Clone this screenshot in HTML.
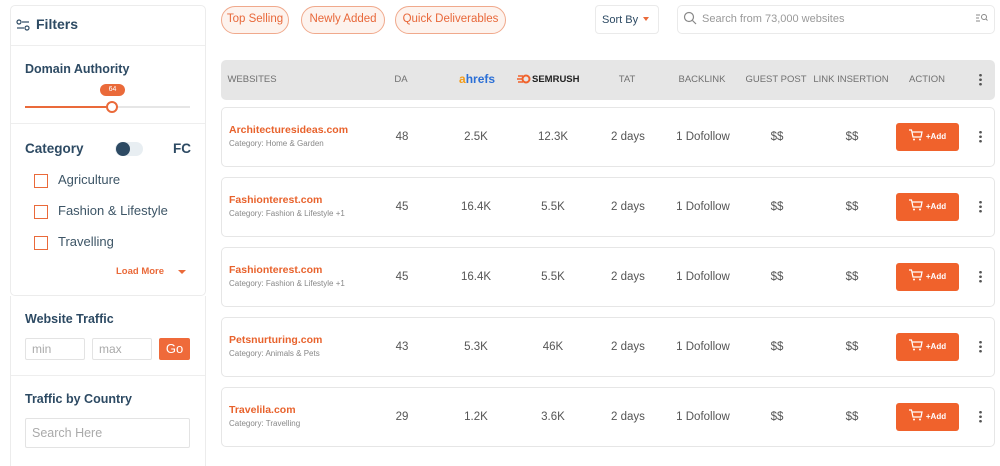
<!DOCTYPE html><html><head><style>
*{box-sizing:border-box;margin:0;padding:0}
body{width:1000px;height:455px;background:#fff;font-family:"Liberation Sans",sans-serif;position:relative;overflow:hidden;color:#2d4a63}
.a{position:absolute}
.card{position:absolute;border:1px solid #ececec;border-radius:5px;background:#fff}
.h{font-weight:bold;color:#2d4a63;font-size:12.5px}
.pill{position:absolute;top:6px;height:28px;border:1.5px solid #f0a98c;border-radius:14px;background:#fdf3ee;color:#e8683a;font-size:11.5px;line-height:25px;text-align:center}
.cb{position:absolute;left:34px;width:14px;height:14px;border:1.5px solid #ea6a3a}
.cl{position:absolute;left:58px;font-size:13px;color:#3d5566}
.th{position:absolute;top:74px;font-size:9.5px;color:#707070;text-align:center;transform:translateX(-50%);white-space:nowrap}
.row{position:absolute;left:221px;width:774px;height:60px;border:1px solid #e6e6e6;border-radius:5px;background:#fff}
.c{position:absolute;top:23px;font-size:11.5px;color:#555;transform:translateX(-50%);white-space:nowrap}
.site{position:absolute;left:7px;top:16px;color:#e8622c;font-size:10.5px;font-weight:bold}
.cat{position:absolute;left:7px;top:31px;color:#888;font-size:8px}
.btn{position:absolute;left:674px;top:15px;width:63px;height:28px;background:#f0622c;border-radius:3px;color:#fff;font-size:8px;font-weight:bold;line-height:28px;text-align:center}
.dots{position:absolute;width:3px;height:13px;background:radial-gradient(circle,#555 1.2px,transparent 1.5px) 0 0/3px 4.5px repeat-y}
</style></head><body>
<div class="card" style="left:10px;top:5px;width:196px;height:291px"></div>
<div class="a" style="left:11px;top:45px;width:194px;height:1px;background:#eee"></div>
<div class="a" style="left:11px;top:123px;width:194px;height:1px;background:#eee"></div>
<svg class="a" style="left:16px;top:19px" width="14" height="12"><circle cx="3" cy="3" r="2" fill="none" stroke="#2d4a63" stroke-width="1.2"/><line x1="6" y1="3" x2="13" y2="3" stroke="#2d4a63" stroke-width="1.2"/><line x1="1" y1="9" x2="8" y2="9" stroke="#2d4a63" stroke-width="1.2"/><circle cx="11" cy="9" r="2" fill="none" stroke="#2d4a63" stroke-width="1.2"/></svg>
<div class="a h" style="left:36px;top:16px;font-size:14px">Filters</div>
<div class="a h" style="left:25px;top:62px">Domain Authority</div>
<div class="a" style="left:100px;top:84px;width:25px;height:12px;background:#ea6a3a;border-radius:6px;color:#fff;font-size:7px;text-align:center;line-height:12px">64</div>
<div class="a" style="left:25px;top:106px;width:165px;height:2px;background:#e6e6e6"></div>
<div class="a" style="left:25px;top:106px;width:87px;height:2px;background:#ea6a3a"></div>
<div class="a" style="left:106px;top:101px;width:12px;height:12px;border:2px solid #ea6a3a;border-radius:50%;background:#fff"></div>
<div class="a h" style="left:25px;top:141px;font-size:13.5px">Category</div>
<div class="a" style="left:115px;top:142px;width:28px;height:14px;border-radius:7px;background:#e8eef2"></div>
<div class="a" style="left:116px;top:142px;width:14px;height:14px;border-radius:50%;background:#2d4a63"></div>
<div class="a h" style="left:173px;top:141px;font-size:13.5px">FC</div>
<div class="cb" style="top:174px"></div><div class="cl" style="top:172px">Agriculture</div>
<div class="cb" style="top:205px"></div><div class="cl" style="top:203px">Fashion &amp; Lifestyle</div>
<div class="cb" style="top:236px"></div><div class="cl" style="top:234px">Travelling</div>
<div class="a" style="left:116px;top:266px;color:#ea6a3a;font-size:9.5px;font-weight:bold">Load More</div>
<div class="a" style="left:178px;top:270px;border-left:4px solid transparent;border-right:4px solid transparent;border-top:4px solid #ea6a3a"></div>
<div class="a" style="left:10px;top:296px;width:196px;height:170px;border-left:1px solid #ececec;border-right:1px solid #ececec"></div>
<div class="a" style="left:11px;top:375px;width:194px;height:1px;background:#eee"></div>
<div class="a h" style="left:25px;top:312px">Website Traffic</div>
<div class="a" style="left:25px;top:338px;width:60px;height:22px;border:1px solid #e3e3e3;border-radius:2px;color:#aaa;font-size:12px;padding:3px 6px">min</div>
<div class="a" style="left:92px;top:338px;width:60px;height:22px;border:1px solid #e3e3e3;border-radius:2px;color:#aaa;font-size:12px;padding:3px 6px">max</div>
<div class="a" style="left:159px;top:338px;width:31px;height:22px;background:#ef6a3a;border-radius:2px;color:#fff;font-size:13px;text-align:center;line-height:22px">Go</div>
<div class="a h" style="left:25px;top:392px">Traffic by Country</div>
<div class="a" style="left:25px;top:418px;width:165px;height:30px;border:1px solid #e3e3e3;border-radius:2px;color:#aaa;font-size:12.5px;padding:7px 6px">Search Here</div>

<div class="pill" style="left:221px;width:68px">Top Selling</div>
<div class="pill" style="left:301px;width:84px">Newly Added</div>
<div class="pill" style="left:395px;width:111px">Quick Deliverables</div>
<div class="a" style="left:595px;top:5px;width:64px;height:29px;border:1px solid #eaeaea;border-radius:4px;font-size:11px;color:#2d4a63;padding:8px 0 0 6px">Sort By</div>
<div class="a" style="left:643px;top:17px;border-left:3.5px solid transparent;border-right:3.5px solid transparent;border-top:4px solid #ea6a3a"></div>
<div class="a" style="left:677px;top:5px;width:318px;height:29px;border:1px solid #eaeaea;border-radius:5px"></div>
<svg class="a" style="left:683px;top:11px" width="14" height="14"><circle cx="6" cy="6" r="4.5" fill="none" stroke="#888" stroke-width="1.2"/><line x1="9.5" y1="9.5" x2="13" y2="13" stroke="#888" stroke-width="1.2"/></svg>
<div class="a" style="left:702px;top:13px;font-size:11px;color:#999">Search from 73,000 websites</div>
<svg class="a" style="left:976px;top:13px" width="12" height="10"><path d="M0 2h4M0 5h3M0 8h4" stroke="#888"/><circle cx="8" cy="4" r="2.5" fill="none" stroke="#888"/><line x1="9.8" y1="5.8" x2="11.5" y2="7.5" stroke="#888"/></svg>

<div class="a" style="left:221px;top:60px;width:774px;height:40px;background:#e6e6e6;border-radius:5px"></div>
<div class="th" style="left:252px">WEBSITES</div>
<div class="th" style="left:401px">DA</div>
<div class="a" style="left:459px;top:72px;font-size:12px;font-weight:bold;color:#2b6fd6"><span style="color:#f39c1a">a</span>hrefs</div>
<svg class="a" style="left:517px;top:74px" width="14" height="10"><path d="M0 5h6M1 2h5M1 8h5" stroke="#f0622c" stroke-width="1.5"/><circle cx="9" cy="5" r="3.5" fill="none" stroke="#f0622c" stroke-width="2"/></svg>
<div class="a" style="left:532px;top:74px;font-size:9.5px;font-weight:bold;color:#222">SEMRUSH</div>
<div class="th" style="left:627px">TAT</div>
<div class="th" style="left:702px">BACKLINK</div>
<div class="th" style="left:776px">GUEST POST</div>
<div class="th" style="left:851px">LINK INSERTION</div>
<div class="th" style="left:927px">ACTION</div>
<div class="dots" style="left:979px;top:73px"></div>

<div id="rows"></div>
<script>
var d=[["Architecturesideas.com","Home & Garden","48","2.5K","12.3K"],["Fashionterest.com","Fashion & Lifestyle +1","45","16.4K","5.5K"],["Fashionterest.com","Fashion & Lifestyle +1","45","16.4K","5.5K"],["Petsnurturing.com","Animals & Pets","43","5.3K","46K"],["Travelila.com","Travelling","29","1.2K","3.6K"]];
var h="";d.forEach(function(r,i){var t=107+i*70;
h+='<div class="row" style="top:'+t+'px"><div class="site">'+r[0]+'</div><div class="cat">Category: '+r[1].replace("&","&amp;")+'</div>'+
'<div class="c" style="left:180px">'+r[2]+'</div><div class="c" style="left:254px">'+r[3]+'</div><div class="c" style="left:331px">'+r[4]+'</div>'+
'<div class="c" style="left:406px">2 days</div><div class="c" style="left:481px">1 Dofollow</div><div class="c" style="left:555px">$$</div><div class="c" style="left:630px">$$</div>'+
'<div class="btn"><svg width="14" height="12" style="vertical-align:-2px;margin-right:3px"><path d="M0 1h2.5l1.5 7h8l1-5H3.5" fill="none" stroke="#fff" stroke-width="1.2"/><circle cx="5" cy="10.5" r="1" fill="#fff"/><circle cx="11" cy="10.5" r="1" fill="#fff"/></svg>+Add</div>'+
'<div class="dots" style="left:757px;top:22px"></div></div>';});
document.getElementById("rows").innerHTML=h;
</script>
</body></html>
